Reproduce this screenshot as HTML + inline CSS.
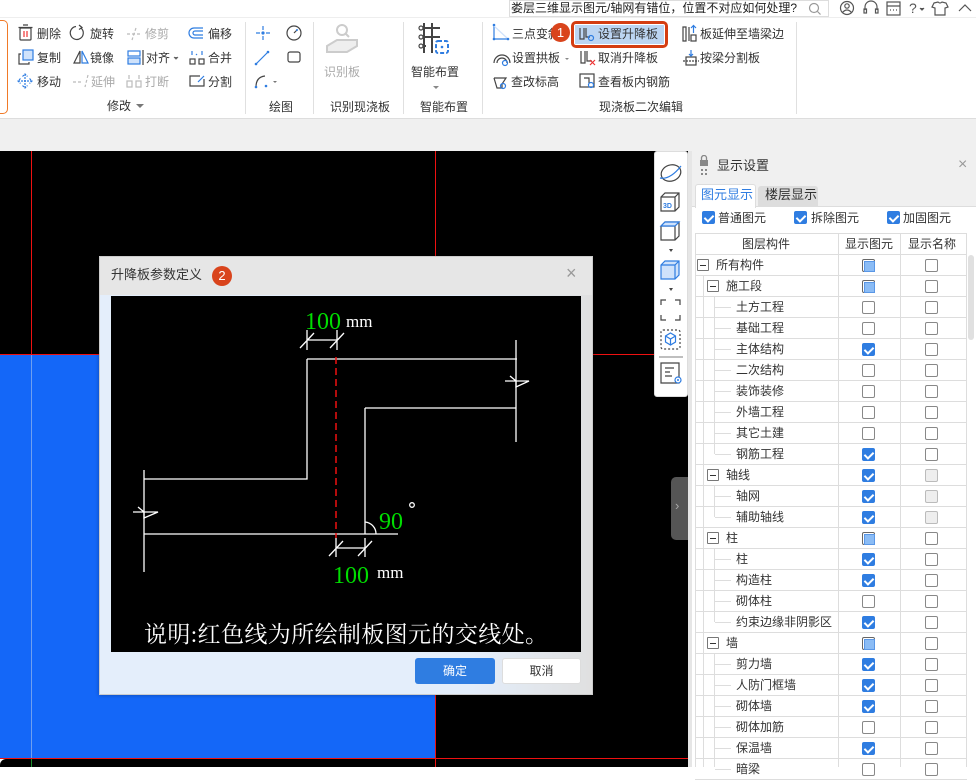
<!DOCTYPE html>
<html><head><meta charset="utf-8">
<style>
*{margin:0;padding:0;box-sizing:border-box}
body{width:976px;height:767px;overflow:hidden;background:#fff;font-family:"Liberation Sans","Noto Sans CJK SC",sans-serif;font-size:12px;color:#333;position:relative}
.a{position:absolute;white-space:nowrap}
.t{position:absolute;white-space:nowrap;font-size:12px;line-height:14px;color:#333}
.g{color:#aaa}
.sep{position:absolute;top:22px;width:1px;height:92px;background:#e0e0e0}
.cb{position:absolute;width:13px;height:13px;border:1px solid #888;border-radius:2px;background:#fff}
.cb.c{background:#2f7de1;border-color:#2f7de1}
.cb.c::after{content:"";position:absolute;left:3px;top:1px;width:4px;height:7px;border:solid #fff;border-width:0 2px 2px 0;transform:rotate(45deg)}
.cb.p{border-color:#666}
.cb.p::after{content:"";position:absolute;left:1px;top:1px;width:9px;height:9px;background:#8bbcf5;border:1px solid #5a97e6}
.cb.d{background:#eee;border-color:#bbb}
.row{position:absolute;left:695px;width:272px;height:21px;border-bottom:1px solid #ddd}
.mb{position:absolute;width:12px;height:12px;border:1px solid #777;background:#fff;border-radius:1px}
.mb::after{content:"";position:absolute;left:2px;top:4.5px;width:6px;height:1px;background:#333}
</style></head><body>

<!-- top bar -->
<div class="a" style="left:509px;top:0;width:320px;height:17px;border:1px solid #ddd;background:#fff"></div>
<div class="t" style="left:511px;top:1px;color:#222">娄层三维显示图元/轴网有错位，位置不对应如何处理?</div>
<svg class="a" style="left:808px;top:2px" width="14" height="14"><circle cx="6" cy="6" r="4.5" fill="none" stroke="#999" stroke-width="1.2"/><path d="M9.5 9.5l3 3" stroke="#999" stroke-width="1.2"/></svg>
<svg class="a" style="left:838px;top:0" width="138" height="17" fill="none" stroke="#555" stroke-width="1.2">
<circle cx="9" cy="8" r="6.5"/><circle cx="9" cy="6" r="2.2"/><path d="M4.5 12.5q4.5-5 9 0"/>
<path d="M27 10v-3a6 6 0 0 1 12 0v3"/><rect x="26" y="9" width="2.5" height="4"/><rect x="37.5" y="9" width="2.5" height="4"/>
<rect x="49" y="2" width="13" height="13"/><path d="M49 6h13M52 10h1M55 10h1M58 10h1"/>
<text x="71" y="13" fill="#555" stroke="none" font-size="14">?</text><path d="M82 8l2 2 2-2" fill="#555"/>
<path d="M96 3l4-1q2 2 4 0l4 1 2 4-3 1v7h-10v-7l-3-1z"/>
<path d="M121 11l6-6 6 6"/>
</svg>

<!-- ribbon -->
<div class="a" style="left:0;top:17px;width:976px;height:102px;border-top:1px solid #eee;border-bottom:1px solid #ddd;background:#fff"></div>
<div class="a" style="left:-4px;top:20px;width:12px;height:94px;border:1px solid #f07a28;border-left:none;border-radius:0 5px 5px 0"></div>

<svg class="a" style="left:0;top:17px" width="976" height="102" fill="none" stroke-width="1.2">
<!-- delete -->
<rect x="20" y="11" width="11" height="12" stroke="#444" rx="1"/><path d="M18.5 10.5h14M23 8h5" stroke="#444"/><path d="M24 14v6M27 14v6" stroke="#e33"/>
<!-- rotate -->
<path d="M81 11a6.5 6.5 0 1 1-5 -1.5" stroke="#444"/><path d="M79 8l3 2.5-3 2" stroke="#444"/>
<!-- trim gray -->
<path d="M127 17h14M136 11l-4 12" stroke="#bbb" stroke-dasharray="3 2"/>
<!-- offset -->
<path d="M203 11h-9a5 5 0 0 0 0 10h9M203 14h-8a2 2 0 0 0 0 4h8" stroke="#2f7de1"/>
<!-- copy -->
<rect x="23" y="33" width="10" height="10" fill="#cfe2fb" stroke="#2f7de1"/><path d="M21 37h-2v10h10v-2" stroke="#444"/>
<!-- mirror -->
<path d="M80 34l-6 12h6z" stroke="#444"/><path d="M82 34l6 12h-6z" stroke="#2f7de1"/>
<!-- align -->
<rect x="128" y="34" width="12" height="5" stroke="#2f7de1"/><rect x="128" y="41" width="12" height="6" fill="#cfe2fb" stroke="#2f7de1"/><path d="M143 33v15" stroke="#444"/>
<path d="M174 40l2 2 2-2" fill="#666" stroke="#666" stroke-width="1"/>
<!-- merge -->
<rect x="190" y="42" width="5" height="5" stroke="#444"/><rect x="199" y="42" width="5" height="5" stroke="#444"/><path d="M192 34v4M202 34v4M196 37l1 1" stroke="#2f7de1"/>
<!-- move -->
<path d="M25 57v14M18 64h14M22.5 59.5l2.5-2.5 2.5 2.5M22.5 68.5l2.5 2.5 2.5-2.5M20.5 61.5l-2.5 2.5 2.5 2.5M29.5 61.5l2.5 2.5-2.5 2.5" stroke="#2f7de1" stroke-dasharray="2 1"/>
<!-- extend gray -->
<path d="M73 65h10M88 58l-3 12" stroke="#bbb" stroke-dasharray="3 2"/>
<!-- break gray -->
<rect x="127" y="64" width="5" height="6" stroke="#bbb"/><rect x="136" y="64" width="5" height="6" stroke="#bbb"/><path d="M129 58v4M139 58v4" stroke="#bbb"/>
<!-- split -->
<path d="M200 59h-10v10h14v-7" stroke="#444"/><path d="M198 65l6-6" stroke="#2f7de1"/>
<path d="M136 87l4 4 4-4z" fill="#777" stroke="none"/>
<!-- draw -->
<path d="M256 16h4M266 16h4M263 9v4M263 19v4" stroke="#2f7de1"/><circle cx="263" cy="16" r="1.6" fill="#2f7de1" stroke="none"/>
<circle cx="294" cy="16" r="7" stroke="#444"/><path d="M294 16l3-3" stroke="#444"/><circle cx="297" cy="13" r="1" fill="#2f7de1"/>
<path d="M256 47l12-12" stroke="#2f7de1"/><circle cx="256" cy="47" r="1.3" fill="#2f7de1"/><circle cx="268" cy="35" r="1.3" fill="#2f7de1"/>
<rect x="288" y="35" width="12" height="10" rx="2" stroke="#444"/>
<path d="M256 70q0-10 9-11" stroke="#444"/><circle cx="256" cy="70" r="1.3" fill="#2f7de1"/><circle cx="266" cy="69" r="1.3" fill="#2f7de1"/><path d="M273 64l2 2 2-2z" fill="#777" stroke="none"/>
<!-- identify board gray -->
<circle cx="342" cy="13" r="5" stroke="#ccc" stroke-width="2"/><path d="M346 17l3 3" stroke="#ccc" stroke-width="2"/>
<path d="M327 29l10-6 20 0v6l-10 6h-20z" stroke="#ccc" stroke-width="2" fill="#eee"/>
<!-- smart -->
<path d="M424 6v30M432 6v30M420 11h20M420 20h20M420 29h6" stroke="#444" stroke-width="2"/>
<circle cx="421" cy="11" r="2" stroke="#444" fill="#fff"/><circle cx="421" cy="20" r="2" stroke="#444" fill="#fff"/><circle cx="421" cy="29" r="2" stroke="#444" fill="#fff"/>
<rect x="436" y="24" width="12" height="12" rx="2" stroke="#2f7de1" stroke-width="2" stroke-dasharray="4 2"/><circle cx="442" cy="30" r="1.3" fill="#2f7de1" stroke="none"/>
<path d="M433 69l3 3 3-3z" fill="#888" stroke="none"/>
<!-- three point -->
<path d="M494 8v14h14" stroke="#2f7de1"/><path d="M494 9l13 12" stroke="#cfe2fb"/><circle cx="494" cy="8" r="1.3" fill="#2f7de1"/><circle cx="494" cy="22" r="1.3" fill="#2f7de1"/><circle cx="508" cy="22" r="1.3" fill="#2f7de1"/>
<!-- arch -->
<path d="M494 46a8 8 0 0 1 16 0M497 46a5 5 0 0 1 10 0" stroke="#444"/><circle cx="505" cy="46" r="2.5" stroke="#2f7de1"/>
<path d="M565 41l2 2 2-2z" fill="#888" stroke="none"/>
<!-- check elev -->
<path d="M494 61h12l-4 6v4h-5l-3-10" stroke="#444"/><circle cx="503" cy="69" r="2.5" stroke="#2f7de1"/>
<!-- cancel lift -->
<path d="M581 34v12h4v-12M587 34v10h5" stroke="#444"/><path d="M590 43l5 5M595 43l-5 5" stroke="#e33"/>
<!-- view rebar -->
<rect x="580" y="57" width="14" height="13" stroke="#444"/><path d="M584 61h5v5" stroke="#444"/><circle cx="591" cy="68" r="2.5" stroke="#2f7de1"/>
<!-- extend to wall -->
<path d="M683 10v14h3v-14zM689 10v14" stroke="#444"/><rect x="691" y="18" width="5" height="6" stroke="#444"/><path d="M693.5 16v-7M691 11l2.5-2.5 2.5 2.5" stroke="#2f7de1"/>
<!-- split by beam -->
<rect x="686" y="40" width="10" height="8" stroke="#444"/><path d="M683 44h16" stroke="#444" stroke-dasharray="2 1"/><path d="M691 33v6M689 37l2 2 2-2" stroke="#2f7de1"/>
</svg>

<div class="t" style="left:37px;top:27px">删除</div><div class="t" style="left:90px;top:27px">旋转</div><div class="t g" style="left:145px;top:27px">修剪</div><div class="t" style="left:208px;top:27px">偏移</div>
<div class="t" style="left:37px;top:51px">复制</div><div class="t" style="left:90px;top:51px">镜像</div><div class="t" style="left:146px;top:51px">对齐</div><div class="t" style="left:208px;top:51px">合并</div>
<div class="t" style="left:37px;top:75px">移动</div><div class="t g" style="left:91px;top:75px">延伸</div><div class="t g" style="left:145px;top:75px">打断</div><div class="t" style="left:208px;top:75px">分割</div>
<div class="t" style="left:107px;top:99px">修改</div>
<div class="sep" style="left:245px"></div>
<div class="t" style="left:269px;top:100px">绘图</div>
<div class="sep" style="left:313px"></div>
<div class="t g" style="left:324px;top:65px">识别板</div>
<div class="t" style="left:330px;top:100px">识别现浇板</div>
<div class="sep" style="left:403px"></div>
<div class="t" style="left:411px;top:65px">智能布置</div>
<div class="t" style="left:420px;top:100px">智能布置</div>
<div class="sep" style="left:482px"></div>
<div class="t" style="left:512px;top:27px">三点变斜</div>
<div class="a" style="left:551px;top:23px;width:19px;height:19px;border-radius:50%;background:#d9441c;color:#fff;font-size:13px;line-height:19px;text-align:center">1</div>
<div class="a" style="left:571px;top:21px;width:97px;height:27px;border:3px solid #d43d12;border-radius:5px;background:#fff"></div>
<div class="a" style="left:575px;top:25px;width:89px;height:19px;background:#bcd5f2"></div>
<svg class="a" style="left:578px;top:26px" width="18" height="16" fill="none" stroke="#444" stroke-width="1.2"><path d="M2 2v11h4v-11M8 2v9h4"/><circle cx="13" cy="12" r="2.5" stroke="#2f7de1"/></svg>
<div class="t" style="left:598px;top:27px">设置升降板</div>
<div class="t" style="left:700px;top:27px">板延伸至墙梁边</div>
<div class="t" style="left:512px;top:51px">设置拱板</div><div class="t" style="left:598px;top:51px">取消升降板</div><div class="t" style="left:700px;top:51px">按梁分割板</div>
<div class="t" style="left:511px;top:75px">查改标高</div><div class="t" style="left:598px;top:75px">查看板内钢筋</div>
<div class="t" style="left:599px;top:100px">现浇板二次编辑</div>
<div class="sep" style="left:796px"></div>

<!-- gray band -->
<div class="a" style="left:0;top:119px;width:976px;height:32px;background:#f0f0f0"></div>

<!-- canvas -->
<div class="a" style="left:0;top:151px;width:688px;height:616px;background:#000"></div>
<div class="a" style="left:0;top:355px;width:436px;height:403px;background:#1467f8"></div>
<div class="a" style="left:31px;top:151px;width:1px;height:204px;background:#e11"></div>
<div class="a" style="left:31px;top:355px;width:1px;height:403px;background:#6f9ff0"></div>
<div class="a" style="left:31px;top:758px;width:1px;height:9px;background:#1a8a2a"></div>
<div class="a" style="left:435px;top:151px;width:1px;height:616px;background:#e11"></div>
<div class="a" style="left:0;top:354px;width:654px;height:1px;background:#e11"></div>
<div class="a" style="left:0;top:758px;width:688px;height:1px;background:#e11"></div>
<div class="a" style="left:0;top:759px;width:8px;height:8px;background:#fff;border-radius:0 0 0 0"></div>
<div class="a" style="left:0;top:759px;width:10px;height:8px;background:#000;border-radius:6px 0 0 0"></div>

<!-- right toolbar -->
<div class="a" style="left:654px;top:151px;width:34px;height:246px;background:#fff;border:1px solid #ddd;border-radius:3px"></div>
<svg class="a" style="left:654px;top:151px" width="34" height="246" fill="none" stroke-width="1.2">
<ellipse cx="17" cy="22" rx="10" ry="8" stroke="#444" transform="rotate(-20 17 22)"/><path d="M6 27q10 2 21-12" stroke="#2f7de1"/>
<path d="M7 46l4-4h14v14l-4 4h-14zM7 46h14v14M21 46l4-4" stroke="#444"/><text x="9" y="57" font-size="7" fill="#2f7de1" stroke="none" font-weight="bold">3D</text>
<path d="M7 75l4-4h14v14l-4 4h-14zM7 75h14v14M21 75l4-4" stroke="#444"/><path d="M7 75l4-4h14l-4 4z" stroke="#2f7de1" fill="#cfe2fb"/>
<path d="M15 98l2 3 2-3z" fill="#444" stroke="none"/>
<path d="M7 114l4-4h14v14l-4 4h-14z" stroke="#2f7de1" fill="#cfe2fb"/><path d="M7 114h14v14M21 114l4-4" stroke="#2f7de1"/>
<path d="M15 137l2 3 2-3z" fill="#444" stroke="none"/>
<path d="M7 154v-5h5M21 149h5v5M26 164v5h-5M12 169h-5v-5" stroke="#444"/>
<rect x="7" y="179" width="19" height="19" rx="2" stroke="#444" stroke-dasharray="2 2"/><path d="M16.5 182l5 3v6l-5 3-5-3v-6zM11.5 185l5 3 5-3M16.5 188v6" stroke="#2f7de1"/>
<path d="M5 206h24" stroke="#999"/>
<path d="M7 212h18v20h-18zM11 217h9M11 221h5M11 225h7" stroke="#444"/><circle cx="24" cy="229" r="3" stroke="#2f7de1" fill="#fff"/><circle cx="24" cy="229" r="1" fill="#2f7de1"/>
</svg>
<div class="a" style="left:671px;top:477px;width:17px;height:63px;background:#555;border-radius:5px 0 0 5px"></div>
<div class="a" style="left:675px;top:498px;color:#aaa;font-size:13px">›</div>

<!-- right panel -->
<div class="a" style="left:688px;top:151px;width:288px;height:616px;background:#fff;border-left:4px solid #e6e6e6"></div>
<div class="a" style="left:692px;top:151px;width:284px;height:31px;background:#f0f0f0"></div>
<svg class="a" style="left:698px;top:155px" width="12" height="22"><rect x="2" y="5" width="8" height="6" fill="#888"/><path d="M3.5 5v-2a2.5 2.5 0 0 1 5 0v2" fill="none" stroke="#888" stroke-width="1.3"/><rect x="3" y="14" width="2" height="2" fill="#888"/><rect x="7" y="14" width="2" height="2" fill="#888"/><rect x="3" y="18" width="2" height="2" fill="#888"/><rect x="7" y="18" width="2" height="2" fill="#888"/></svg>
<div class="t" style="left:717px;top:159px;font-size:13px">显示设置</div>
<div class="a" style="left:958px;top:156px;color:#999;font-size:16px">×</div>
<div class="a" style="left:692px;top:182px;width:284px;height:25px;background:#f0f0f0;border-bottom:1px solid #ddd"></div>
<div class="a" style="left:695px;top:184px;width:61px;height:24px;background:#fff;border:1px solid #ddd;border-bottom:none;border-radius:3px 3px 0 0"></div>
<div class="t" style="left:701px;top:188px;font-size:13px;color:#2f7de1">图元显示</div>
<div class="a" style="left:758px;top:186px;width:60px;height:21px;background:#ddd;border-radius:3px 3px 0 0"></div>
<div class="t" style="left:765px;top:188px;font-size:13px">楼层显示</div>
<div class="cb c" style="left:702px;top:211px"></div><div class="t" style="left:718px;top:211px">普通图元</div>
<div class="cb c" style="left:794px;top:211px"></div><div class="t" style="left:811px;top:211px">拆除图元</div>
<div class="cb c" style="left:887px;top:211px"></div><div class="t" style="left:903px;top:211px">加固图元</div>
<div class="a" style="left:695px;top:233px;width:272px;height:534px;border:1px solid #ddd;border-bottom:none"></div>
<div class="a" style="left:838px;top:233px;width:1px;height:534px;background:#ddd"></div>
<div class="a" style="left:900px;top:233px;width:1px;height:534px;background:#ddd"></div>
<div class="row" style="top:233px;height:22px"></div>
<div class="t" style="left:742px;top:237px">图层构件</div><div class="t" style="left:845px;top:237px">显示图元</div><div class="t" style="left:908px;top:237px">显示名称</div>
<div class="a" style="left:968px;top:255px;width:6px;height:85px;background:#e0e0e0;border-radius:3px"></div>
<div class="a" style="left:703px;top:276px;width:1px;height:491px;background:#ddd"></div>
<div class="a" style="left:714px;top:297px;width:1px;height:157px;background:#ddd"></div>
<div class="a" style="left:714px;top:486px;width:1px;height:31px;background:#ddd"></div>
<div class="a" style="left:714px;top:549px;width:1px;height:73px;background:#ddd"></div>
<div class="a" style="left:714px;top:654px;width:1px;height:113px;background:#ddd"></div>

<div id="rows"></div>
<script>
var R=[["所有构件",0,"p"],["施工段",1,"p"],["土方工程",2,""],["基础工程",2,""],["主体结构",2,"c"],["二次结构",2,""],["装饰装修",2,""],["外墙工程",2,""],["其它土建",2,""],["钢筋工程",2,"c"],["轴线",1,"c","d"],["轴网",2,"c","d"],["辅助轴线",2,"c","d"],["柱",1,"p"],["柱",2,"c"],["构造柱",2,"c"],["砌体柱",2,""],["约束边缘非阴影区",2,"c"],["墙",1,"p"],["剪力墙",2,"c"],["人防门框墙",2,"c"],["砌体墙",2,"c"],["砌体加筋",2,""],["保温墙",2,"c"],["暗梁",2,""]];
var h="";R.forEach(function(r,i){var y=255+i*21;h+='<div class="row" style="top:'+y+'px"></div>';
if(r[1]==0)h+='<div class="mb" style="left:697px;top:'+(y+4)+'px"></div><div class="t" style="left:716px;top:'+(y+3)+'px">'+r[0]+'</div>';
else if(r[1]==1)h+='<div class="mb" style="left:707px;top:'+(y+4)+'px"></div><div class="t" style="left:726px;top:'+(y+3)+'px">'+r[0]+'</div>';
else h+='<div class="a" style="left:715px;top:'+(y+10)+'px;width:16px;height:1px;background:#ddd"></div><div class="t" style="left:736px;top:'+(y+3)+'px">'+r[0]+'</div>';
h+='<div class="cb '+r[2]+'" style="left:862px;top:'+(y+4)+'px"></div><div class="cb '+(r[3]||"")+'" style="left:925px;top:'+(y+4)+'px"></div>';});
document.getElementById("rows").innerHTML=h;
</script>

<!-- dialog -->
<div class="a" style="left:99px;top:256px;width:494px;height:439px;background:linear-gradient(90deg,#e4eefb 0%,#e4eefb 75%,#e0e0e0 100%);border:1px solid #ccc;box-shadow:0 0 4px rgba(0,0,0,.3)"></div>
<div class="a" style="left:100px;top:257px;width:492px;height:38px;background:#e6e6e6"></div>
<div class="t" style="left:111px;top:268px;font-size:13px;color:#333">升降板参数定义</div>
<div class="a" style="left:212px;top:266px;width:20px;height:20px;border-radius:50%;background:#d9441c;color:#fff;font-size:13px;line-height:20px;text-align:center">2</div>
<div class="a" style="left:566px;top:263px;color:#999;font-size:18px">×</div>
<div class="a" style="left:111px;top:296px;width:470px;height:356px;background:#000"></div>
<svg class="a" style="left:111px;top:296px" width="470" height="356" fill="none" stroke="#fff" stroke-width="1.3">
<path d="M196 63H406M196 63V183H33M33 238H287M254 112V238M254 112H405M405 44V146M33 174V276"/>
<path d="M225 61V242" stroke="#e11" stroke-width="1.5" stroke-dasharray="7 4"/>
<path d="M196 44H226M196 34V54M226 34V54M189 52L203 37M219 52L233 37"/>
<path d="M225 252H254M225 242V261M254 242V261M218 260L232 245M247 260L261 245"/>
<path d="M254 226A12 12 0 0 1 265 238"/>
<path d="M394 85H405L399 80M405 85V91L418 85H405"/>
<path d="M22 216H33L27 211M33 216V222L47 216H33"/>
<circle cx="301" cy="209" r="2.3"/>
<text x="194" y="33" fill="#0d0" stroke="none" font-family="Liberation Serif,serif" font-size="24">100</text>
<text x="235" y="31" fill="#fff" stroke="none" font-family="Liberation Serif,serif" font-size="17">mm</text>
<text x="222" y="287" fill="#0d0" stroke="none" font-family="Liberation Serif,serif" font-size="24">100</text>
<text x="266" y="282" fill="#fff" stroke="none" font-family="Liberation Serif,serif" font-size="17">mm</text>
<text x="268" y="233" fill="#0d0" stroke="none" font-family="Liberation Serif,serif" font-size="24">90</text>
<text x="33" y="346" fill="#fff" stroke="none" font-family="'Liberation Serif','Noto Serif CJK SC',serif" font-size="23" textLength="404">说明:红色线为所绘制板图元的交线处。</text>
</svg>
<div class="a" style="left:415px;top:658px;width:80px;height:26px;background:#2f7de1;border-radius:3px;color:#fff;text-align:center;line-height:26px">确定</div>
<div class="a" style="left:502px;top:658px;width:79px;height:26px;background:#fff;border:1px solid #ddd;border-radius:3px;color:#333;text-align:center;line-height:24px">取消</div>
</body></html>
